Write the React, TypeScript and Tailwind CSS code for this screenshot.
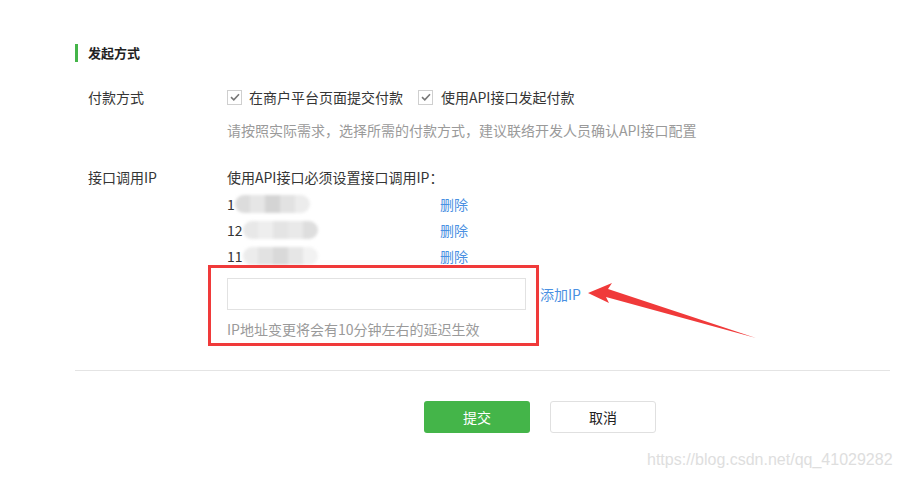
const font = { fontFamily: '"Noto Sans CJK SC", "Noto Sans", sans-serif' };

const ips = [
  { head: '1', blocks: ['#dcdcdc', '#e6e6e6', '#d4d4d4', '#e2e2e2', '#ececec'] },
  { head: '12', blocks: ['#e8e8e8', '#eeeeee', '#e4e4e4', '#e9e9e9', '#dedede'] },
  { head: '11', blocks: ['#ececec', '#e2e2e2', '#d9d9d9', '#e6e6e6', '#f2f2f2'] },
];

function Check() {
  return (
    <span className="flex h-[15px] w-[15px] items-center justify-center border border-[#cfcfcf] bg-white">
      <svg width="10" height="8" viewBox="0 0 10 8">
        <path d="M1 4.2 L3.8 6.8 L9 1.2" fill="none" stroke="#777" strokeWidth="1.6" />
      </svg>
    </span>
  );
}

export default function App() {
  return (
    <div className="relative h-[477px] w-[899px] overflow-hidden bg-white text-[14px] text-[#353535]" style={font}>
      <div className="pl-[75px] pr-[9px] pt-[44px]">
        <div className="flex h-[18px] items-center border-l-[3px] border-[#44b549] pl-[10px] text-[13px] font-bold text-[#222]">
          发起方式
        </div>

        <div className="mt-[25px] flex pl-[13px]">
          <div className="w-[139px] leading-[20px]">付款方式</div>
          <div>
            <div className="flex h-[20px] items-center">
              <Check />
              <span className="ml-[7px]">在商户平台页面提交付款</span>
              <span className="ml-[15px]"><Check /></span>
              <span className="ml-[8px]">使用API接口发起付款</span>
            </div>
            <div className="mt-[13px] text-[#9a9a9a] leading-[20px]">
              请按照实际需求，选择所需的付款方式，建议联络开发人员确认API接口配置
            </div>
          </div>
        </div>

        <div className="mt-[27px] flex pl-[13px]">
          <div className="w-[139px] leading-[20px]">接口调用IP</div>
          <div>
            <div className="leading-[20px]">使用API接口必须设置接口调用IP：</div>
            <div className="mt-[4px]">
              {ips.map((ip) => (
                <div key={ip.head} className="flex h-[26px] items-center">
                  <div className="flex w-[213px] items-center">
                    <span>{ip.head}</span>
                    <div className="flex h-[18px] overflow-hidden rounded-full blur-[1.5px]">
                      {ip.blocks.map((c, i) => (
                        <span key={i} className="h-full w-[15px]" style={{ backgroundColor: c }} />
                      ))}
                    </div>
                  </div>
                  <span className="text-[#4a90e2]">删除</span>
                </div>
              ))}
            </div>
            <div className="mt-[9px] flex items-center">
              <div className="h-[32px] w-[299px] border border-[#e2e2e2] bg-white" />
              <span className="ml-[14px] text-[#4a90e2]">添加IP</span>
            </div>
            <div className="mt-[9px] leading-[20px] text-[#9a9a9a]">IP地址变更将会有10分钟左右的延迟生效</div>
          </div>
        </div>

        <div className="mt-[31px] border-t border-[#e4e4e4]" />

        <div className="mt-[30px] flex pl-[349px]">
          <button className="h-[32px] w-[106px] rounded-[3px] bg-[#44b549] text-white">提交</button>
          <button className="ml-[20px] h-[32px] w-[106px] rounded-[3px] border border-[#e0e0e0] bg-white text-[#222]">取消</button>
        </div>
      </div>

      <div className="pointer-events-none absolute left-[208px] top-[265px] h-[81px] w-[331px] border-[3px] border-[#f03a3a]" />
      <svg className="pointer-events-none absolute left-0 top-0" width="899" height="477">
        <polygon points="588,293 612,283 608,289 756,338 606,297 609,303" fill="#f03a3a" />
      </svg>

      <div className="absolute left-[647px] top-[448px] text-[16px] text-[#dedede]" style={{ fontFamily: '"Liberation Sans", sans-serif' }}>
        https://blog.csdn.net/qq_41029282
      </div>
    </div>
  );
}
